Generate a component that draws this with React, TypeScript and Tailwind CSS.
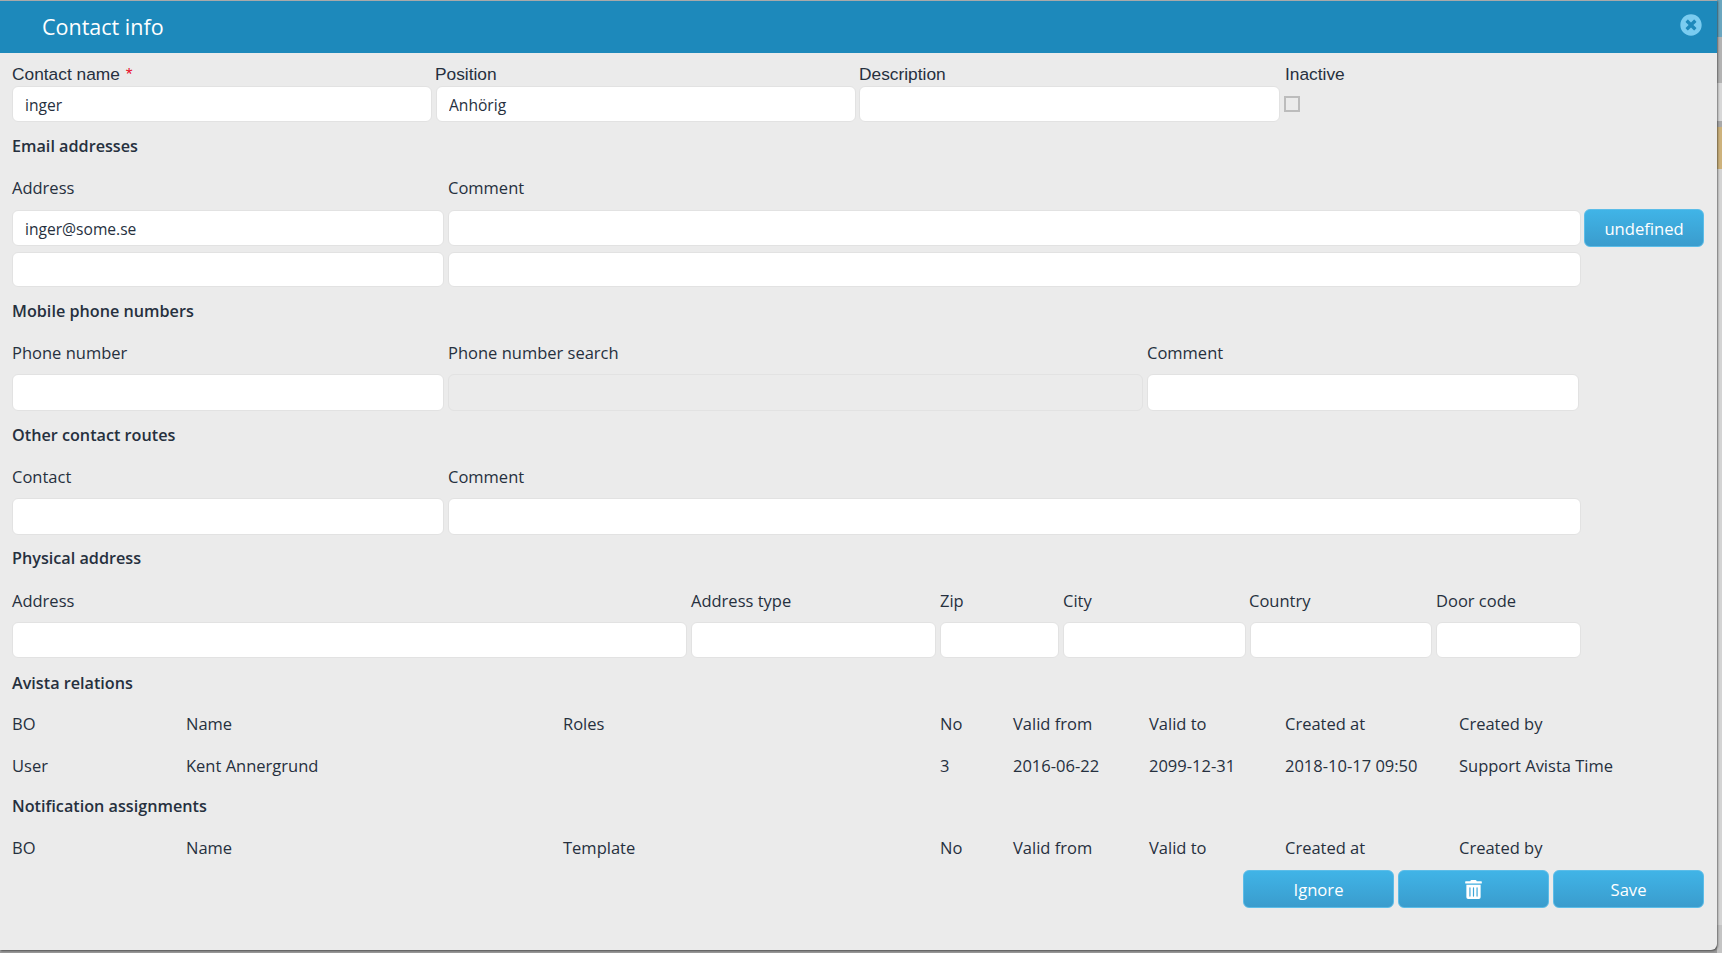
import React from "react";
import { FaTimesCircle, FaTrashAlt } from "react-icons/fa";

const Field = ({ w, value = "", disabled = false }: { w: string; value?: string; disabled?: boolean }) => (
  <input
    readOnly
    value={value}
    disabled={disabled}
    className={`${w} h-full rounded-[6px] border border-[#e2e2e2] px-[12px] pt-[2px] text-[15.6px] text-[#26303e] outline-none ${disabled ? "bg-[#ebebeb]" : "bg-white"}`}
  />
);

const Heading = ({ mt, children }: { mt: string; children: React.ReactNode }) => (
  <h3 className={`${mt} flex h-[24px] items-center text-[16.2px] font-semibold text-[#26303e]`}>{children}</h3>
);

const Label = ({ w, children }: { w: string; children?: React.ReactNode }) => (
  <div className={`${w} shrink-0 whitespace-nowrap`}>{children}</div>
);

const Btn = ({ w, children }: { w: string; children: React.ReactNode }) => (
  <button className={`${w} flex h-full items-center justify-center rounded-[6px] border border-[#5cbde8] bg-gradient-to-b from-[#40b4e7] to-[#3a9ccd] pt-[3px] text-[16.6px] text-white`}>
    {children}
  </button>
);

const tableCols = ["w-[174px]", "w-[377px]", "w-[377px]", "w-[73px]", "w-[136px]", "w-[136px]", "w-[174px]", "w-[160px]"];

const TableRow = ({ mt, cells }: { mt: string; cells: string[] }) => (
  <div className={`${mt} flex h-[24px] items-center`}>
    {cells.map((c, i) => (
      <Label key={i} w={tableCols[i]}>{c}</Label>
    ))}
  </div>
);

export default function App() {
  return (
    <div className="flex h-[953px] w-[1722px] overflow-hidden bg-[#9a9a9a] font-['Open_Sans','Noto_Sans',sans-serif] text-[16.5px] text-[#26303e]">
      <div className="relative z-10 flex h-[950px] w-[1717px] shrink-0 flex-col rounded-br-[6px] border-t border-t-[#a9a9a9] bg-[#ebebeb] shadow-[1px_1px_2px_rgba(0,0,0,0.45)]">
        <header className="flex h-[52px] shrink-0 bg-[#1d89bb] text-white">
          <h2 className="ml-[42px] mt-[10px] text-[21.5px] leading-[32px]">Contact info</h2>
          <FaTimesCircle className="ml-auto mr-[15px] mt-[13px] text-[22px] text-[#7accf0]" />
        </header>

        <main className="flex flex-col pl-[12px]">
          <div className="flex h-[33px] pt-[9px] font-['Liberation_Sans',sans-serif] text-[17.33px] leading-[24px]">
            <Label w="w-[423px]">Contact name <span className="ml-[1px] text-[#e8112d]">*</span></Label>
            <Label w="w-[424px]">Position</Label>
            <Label w="w-[426px]">Description</Label>
            <Label w="w-[100px]">Inactive</Label>
          </div>
          <div className="flex h-[36px] items-center">
            <Field w="w-[420px] mr-[4px]" value="inger" />
            <Field w="w-[420px] mr-[3px]" value="Anhörig" />
            <Field w="w-[421px] mr-[4px]" />
            <input type="checkbox" readOnly className="h-[16px] w-[16px] appearance-none border-2 border-[#bcbcbc] bg-[#ebebeb]" />
          </div>

          <Heading mt="mt-[12px]">Email addresses</Heading>
          <div className="mt-[18px] flex h-[24px] items-center">
            <Label w="w-[436px]">Address</Label>
            <Label w="w-[300px]">Comment</Label>
          </div>
          <div className="mt-[9px] flex h-[38px] py-px">
            <Field w="w-[432px] mr-[4px]" value="inger@some.se" />
            <Field w="w-[1133px] mr-[3px]" />
            <div className="-my-px h-[38px]"><Btn w="w-[120px]">undefined</Btn></div>
          </div>
          <div className="mt-[5px] flex h-[35px] gap-[4px]">
            <Field w="w-[432px]" />
            <Field w="w-[1133px]" />
          </div>

          <Heading mt="mt-[12px]">Mobile phone numbers</Heading>
          <div className="mt-[18px] flex h-[24px] items-center">
            <Label w="w-[436px]">Phone number</Label>
            <Label w="w-[699px]">Phone number search</Label>
            <Label w="w-[300px]">Comment</Label>
          </div>
          <div className="mt-[9px] flex h-[37px] gap-[4px]">
            <Field w="w-[432px]" />
            <Field w="w-[695px]" disabled />
            <Field w="w-[432px]" />
          </div>

          <Heading mt="mt-[12px]">Other contact routes</Heading>
          <div className="mt-[18px] flex h-[24px] items-center">
            <Label w="w-[436px]">Contact</Label>
            <Label w="w-[300px]">Comment</Label>
          </div>
          <div className="mt-[9px] flex h-[37px] gap-[4px]">
            <Field w="w-[432px]" />
            <Field w="w-[1133px]" />
          </div>

          <Heading mt="mt-[11px]">Physical address</Heading>
          <div className="mt-[19px] flex h-[24px] items-center">
            <Label w="w-[679px]">Address</Label>
            <Label w="w-[249px]">Address type</Label>
            <Label w="w-[123px]">Zip</Label>
            <Label w="w-[186px]">City</Label>
            <Label w="w-[187px]">Country</Label>
            <Label w="w-[100px]">Door code</Label>
          </div>
          <div className="mt-[9px] flex h-[36px] gap-[4px]">
            <Field w="w-[675px]" />
            <Field w="w-[245px]" />
            <Field w="w-[119px]" />
            <Field w="w-[183px]" />
            <Field w="w-[182px]" />
            <Field w="w-[145px]" />
          </div>

          <Heading mt="mt-[13px]">Avista relations</Heading>
          <TableRow mt="mt-[17px]" cells={["BO", "Name", "Roles", "No", "Valid from", "Valid to", "Created at", "Created by"]} />
          <TableRow mt="mt-[18px]" cells={["User", "Kent Annergrund", "", "3", "2016-06-22", "2099-12-31", "2018-10-17 09:50", "Support Avista Time"]} />

          <Heading mt="mt-[16px]">Notification assignments</Heading>
          <TableRow mt="mt-[18px]" cells={["BO", "Name", "Template", "No", "Valid from", "Valid to", "Created at", "Created by"]} />

          <div className="mt-[10px] flex h-[38px] justify-end gap-[4px] pr-[13px]">
            <Btn w="w-[151px]">Ignore</Btn>
            <Btn w="w-[151px]"><FaTrashAlt className="mb-[3px] text-[19px]" /></Btn>
            <Btn w="w-[151px]">Save</Btn>
          </div>
        </main>
      </div>

      <div className="flex h-full w-[5px] flex-col text-[0px]">
        <div className="h-[37px] bg-[#6aa6bf]" />
        <div className="h-[46px] bg-[#b3b3b3]" />
        <div className="h-[38px] bg-[#d8d8d8]" />
        <div className="h-[6px] bg-[#a9a9a9]" />
        <div className="h-[42px] bg-[#cdb27c]" />
        <div className="h-[756px] bg-[#d4d4d4]" />
        <div className="flex-1 bg-[#c4c4c4]" />
      </div>
    </div>
  );
}
